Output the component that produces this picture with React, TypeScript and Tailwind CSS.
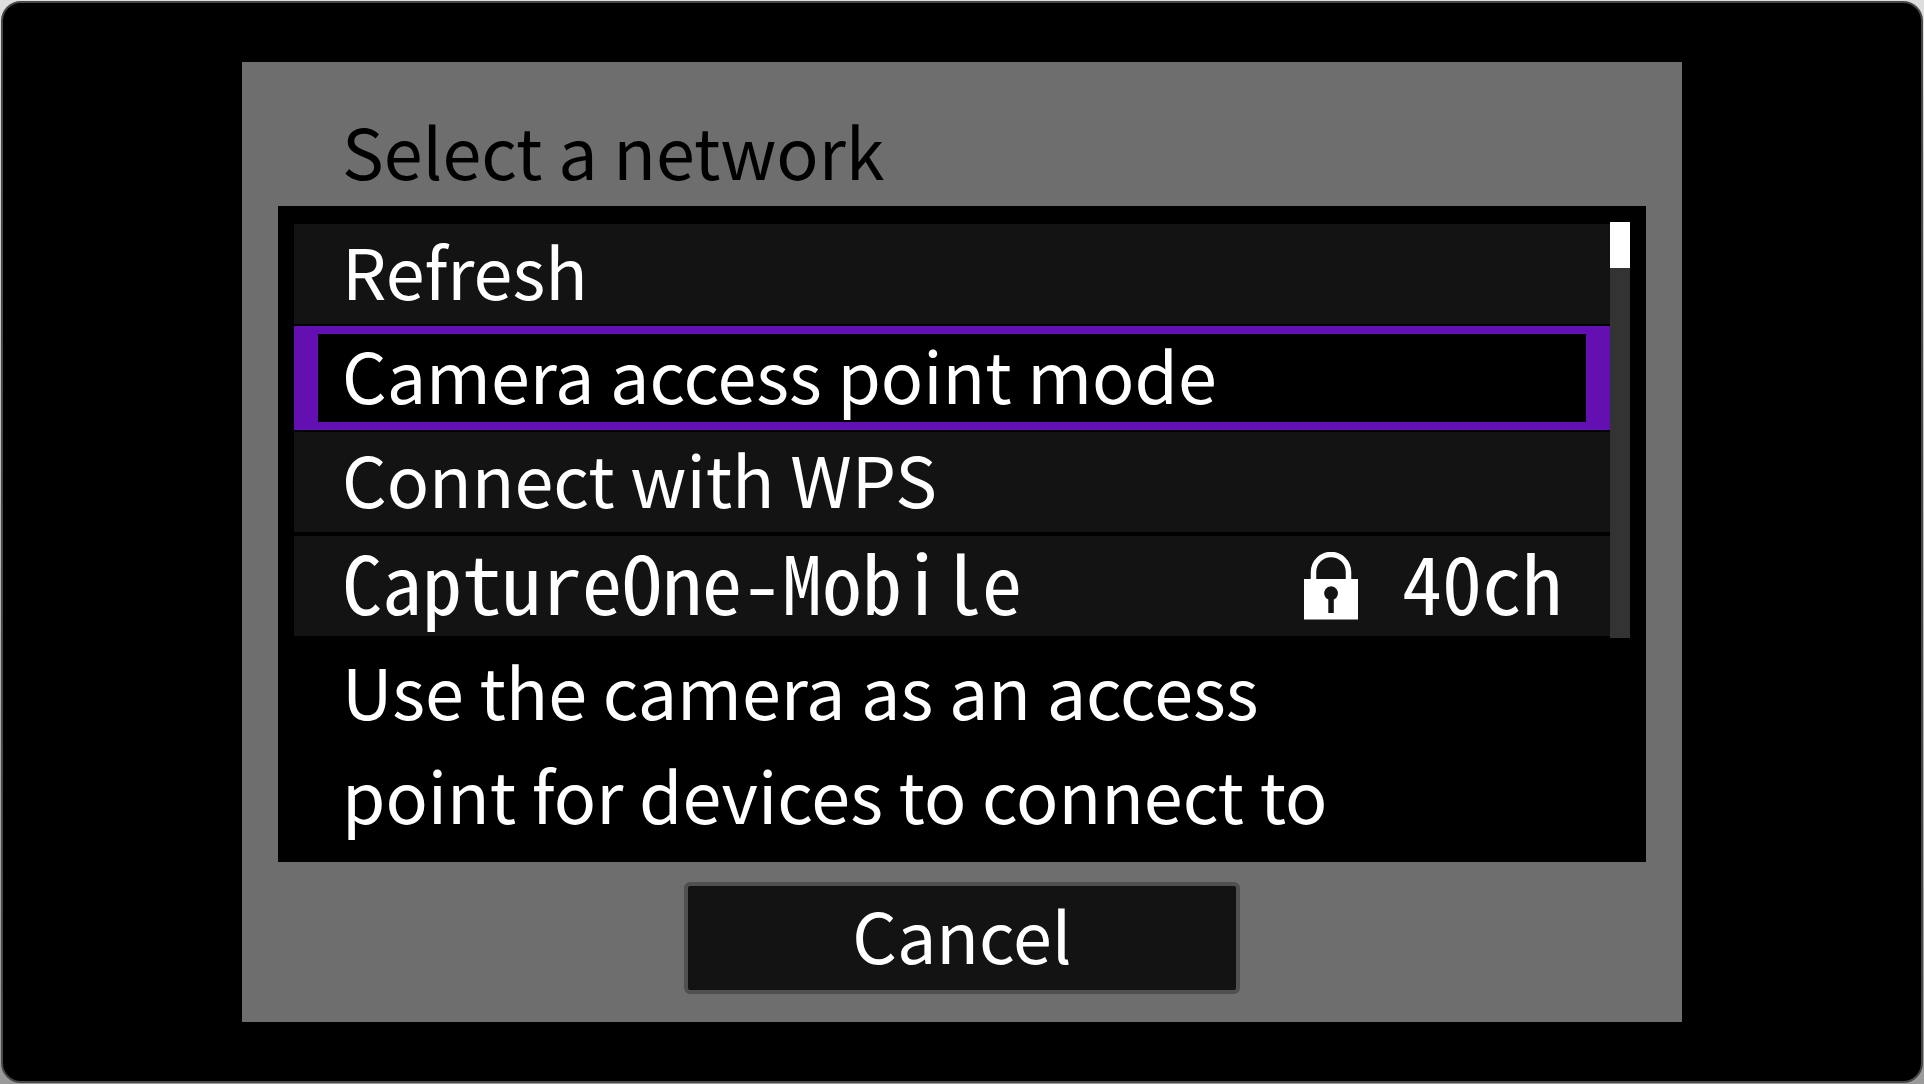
import { useState } from 'react'
import clsx from 'clsx'

type Network = {
  id:       string
  label:    string
  hint:     string
  channel?: string
}

const networks: Network[] = [
  { id: 'refresh', label: 'Refresh', hint: 'Search for networks again' },
  { id: 'camera-ap', label: 'Camera access point mode', hint: 'Use the camera as an access point for devices to connect to' },
  { id: 'wps', label: 'Connect with WPS', hint: 'Connect to an access point with WPS' },
  { id: 'captureone', label: 'CaptureOne-Mobile', hint: 'Connect to this access point', channel: '40ch' },
]

function LockIcon() {
  return (
    <svg viewBox="0 0 54 68" className="h-[68px] w-[54px]" fill="none" role="img" aria-label="Secured">
      <path d="M9.500 28V20a17.500 17.500 0 0 1 35 0V28" stroke="currentColor" strokeWidth="5.500" />
      <path
        fill="currentColor"
        fillRule="evenodd"
        d="M0 27h54v40.500H0zM24.300 47.500V61h5.500V47.500a6.900 6.900 0 1 0-5.500 0z"
      />
    </svg>
  )
}

function NetworkRow({ network, selected, onSelect }: { network: Network; selected: boolean; onSelect: () => void }) {
  return (
    <li className={clsx('h-[104px]', !selected && 'py-0.5')}>
      <button
        type="button"
        aria-pressed={selected}
        onClick={onSelect}
        className={clsx(
          'flex h-full w-full items-center justify-between text-left whitespace-nowrap outline-none',
          selected ? 'border-x-24 border-y-8 border-[#630fb2] bg-black px-6' : 'bg-[#131313] px-12',
          network.channel && "font-['Noto_Sans_Mono_CJK_JP','DejaVu_Sans_Mono',monospace] text-[80px]"
        )}
      >
        <span className={network.channel ? 'pb-3' : 'pb-2'}>{network.label}</span>
        {network.channel && (
          <span className="flex items-center gap-11">
            <LockIcon />
            <span className="pb-3">{network.channel}</span>
          </span>
        )}
      </button>
    </li>
  )
}

export default function App() {
  const [selectedId, setSelectedId] = useState('camera-ap')
  const selected = networks.find(n => n.id === selectedId)

  return (
    <div className="flex min-h-screen bg-linear-to-b from-[#dedede] to-[#9a9a9a] p-px font-['Noto_Sans_CJK_JP',sans-serif] text-[70px] leading-[104px] text-white">
      <main className="flex flex-1 items-center justify-center rounded-[20px] border-2 border-[#484848] bg-black">
        <section className="w-full max-w-[1440px] bg-[#6e6e6e] px-9 pt-9 pb-7">
          <h1 className="pb-1 pl-16 text-black">Select a network</h1>

          <div className="bg-black p-4">
            <div className="flex">
              <ul className="flex-1">
                {networks.map(n => (
                  <NetworkRow
                    key={n.id}
                    network={n}
                    selected={n.id === selectedId}
                    onSelect={() => setSelectedId(n.id)}
                  />
                ))}
              </ul>
              {/* Scroll position */}
              <div className="w-5 bg-[#333333]">
                <div className="h-[46px] bg-white" />
              </div>
            </div>
            <p className="max-w-[1100px] pl-12">{selected?.hint}</p>
          </div>

          <button
            type="button"
            className="mx-auto mt-5 block w-[556px] rounded-md border-4 border-[#505050] bg-[#131313] pb-2 leading-[96px]"
          >
            Cancel
          </button>
        </section>
      </main>
    </div>
  )
}
